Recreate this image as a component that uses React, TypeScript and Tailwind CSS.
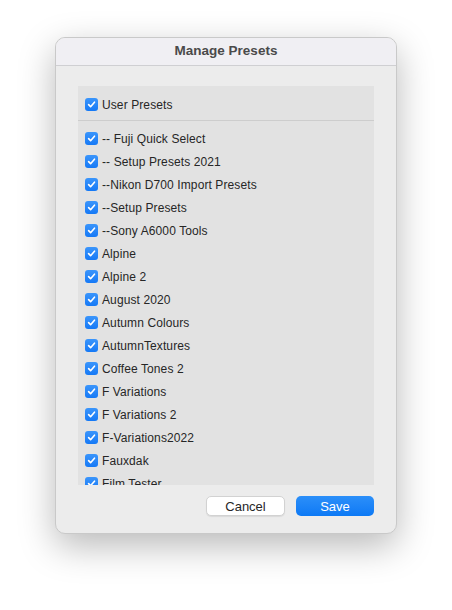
const presets = [
  '-- Fuji Quick Select',
  '-- Setup Presets 2021',
  '--Nikon D700 Import Presets',
  '--Setup Presets',
  '--Sony A6000 Tools',
  'Alpine',
  'Alpine 2',
  'August 2020',
  'Autumn Colours',
  'AutumnTextures',
  'Coffee Tones 2',
  'F Variations',
  'F Variations 2',
  'F-Variations2022',
  'Fauxdak',
  'Film Tester',
]

function CheckBox(): React.JSX.Element {
  return (
    <span className="flex h-[13px] w-[13px] shrink-0 items-center justify-center rounded-[3px] bg-gradient-to-b from-[#3a95fb] to-[#1479f6]">
      <svg width="9" height="9" viewBox="0 0 10 10" fill="none">
        <path d="M1.8 5.2 L4 7.4 L8.3 2.4" stroke="#fff" strokeWidth="1.8" strokeLinecap="round" strokeLinejoin="round" />
      </svg>
    </span>
  )
}

function Row({ label }: { label: string }): React.JSX.Element {
  return (
    <div className="flex h-[23px] items-center gap-[4px] pl-[7px]">
      <CheckBox />
      <span className="text-[12px] leading-none tracking-[0.1px] text-[#262626]">{label}</span>
    </div>
  )
}

export default function App(): React.JSX.Element {
  return (
    <div className="h-[610px] w-[452px] bg-white pl-[55px] pt-[37px] font-['Liberation_Sans',Arial,sans-serif]">
      <div className="flex h-[497px] w-[342px] flex-col overflow-hidden rounded-[10px] border border-[#c9c9c9] bg-[#ececec] shadow-[0_12px_36px_rgba(0,0,0,0.28)]">
        <div className="flex h-[28px] shrink-0 items-center justify-center border-b border-[#cfcfd2] bg-[#f0eff3]">
          <span className="text-[13.5px] font-bold text-[#4a4a4a]">Manage Presets</span>
        </div>
        <div className="flex flex-col px-[22px] pt-[20px]">
          <div className="h-[399px] overflow-hidden bg-[#e2e2e2]">
            <div className="pt-[7px]">
              <Row label="User Presets" />
            </div>
            <div className="mt-[4px] h-px bg-[#cdcdcd]" />
            <div className="pt-[6px]">
              {presets.map((p) => (
                <Row key={p} label={p} />
              ))}
            </div>
          </div>
          <div className="mt-[11px] flex justify-end gap-[11px]">
            <button className="h-[20px] w-[79px] rounded-[5px] border border-[#d2d2d2] bg-white text-[13px] leading-none text-[#262626] shadow-[0_1px_1px_rgba(0,0,0,0.08)]">
              Cancel
            </button>
            <button className="h-[20px] w-[78px] rounded-[5px] bg-gradient-to-b from-[#2b8ff9] to-[#0b79f5] text-[13px] leading-none text-white">
              Save
            </button>
          </div>
        </div>
      </div>
    </div>
  )
}
